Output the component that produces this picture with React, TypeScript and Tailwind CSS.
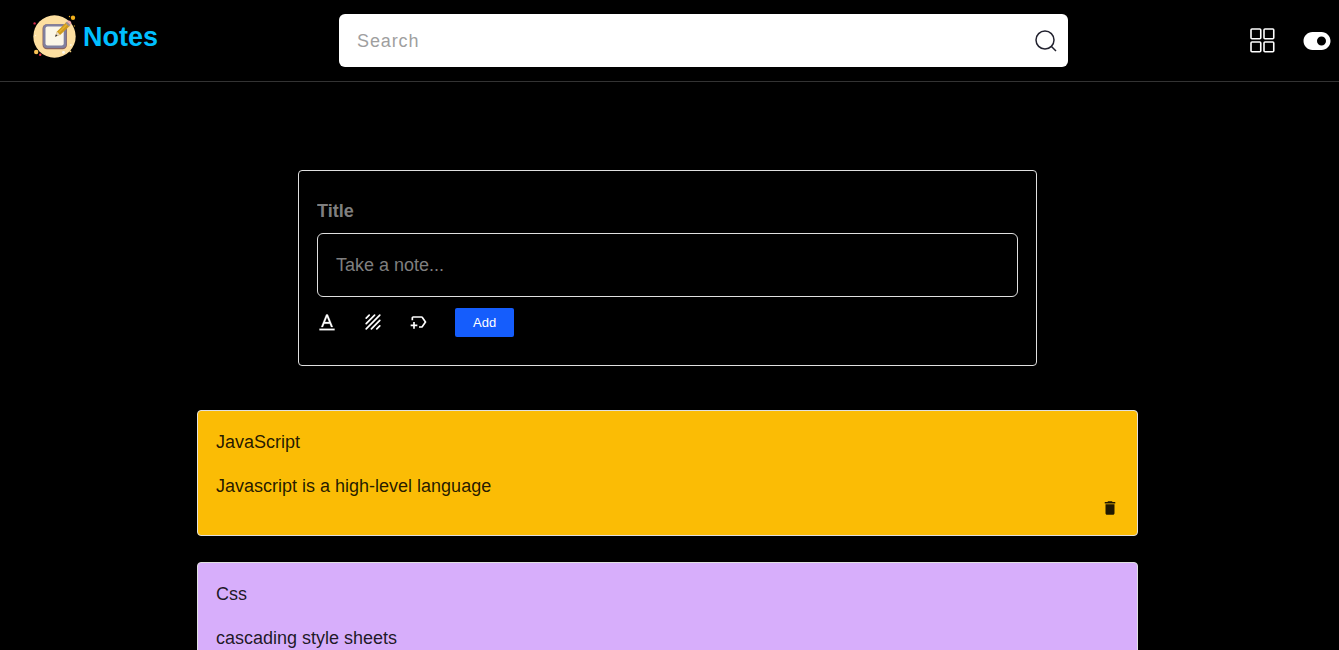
import { FaToggleOn } from "react-icons/fa6";
import { MdDelete, MdOutlineNewLabel } from "react-icons/md";
import { RiFontColor } from "react-icons/ri";

type Note = { title: string; body: string; color: string };

const notes: Note[] = [
  { title: "JavaScript", body: "Javascript is a high-level language", color: "bg-[#fbbc05]" },
  { title: "Css", body: "cascading style sheets", color: "bg-[#d7aefb]" },
];

function Logo() {
  return (
    <svg width="44" height="44" viewBox="0 0 44 44" aria-hidden="true">
      <circle cx="22.5" cy="21.5" r="21.2" fill="#fddfa0" />
      <circle cx="41" cy="2.8" r="2.2" fill="#f2b11c" />
      <circle cx="37.5" cy="1.5" r="0.7" fill="#f2b11c" />
      <circle cx="2.6" cy="8.4" r="1.2" fill="#d8294a" />
      <circle cx="42.4" cy="11" r="0.7" fill="#b98a20" />
      <circle cx="4.2" cy="37" r="2.2" fill="#fbc355" />
      <circle cx="8.2" cy="39.8" r="1.2" fill="#e2334c" />
      <circle cx="38.8" cy="30" r="1.1" fill="#fff6e0" />
      <circle cx="31.5" cy="37.4" r="1.4" fill="#fffdf3" />
      <circle cx="38.4" cy="36.4" r="0.9" fill="#f6cf7c" />
      <circle cx="3.5" cy="20.5" r="0.7" fill="#fff6e0" />
      <rect x="10.5" y="9.2" width="24.5" height="25" rx="4.5" fill="#8a6462" />
      <rect x="11.2" y="9.2" width="23.2" height="23.8" rx="4" fill="#8080a0" />
      <rect x="13.5" y="11.5" width="18.2" height="19" rx="2" fill="#fbf6e7" />
      <path d="M23 21.8 L25 16.4 L34 7.4 L37.6 11 L28.4 19.8 Z" fill="#cf9a1c" />
      <path d="M26.6 17.6 L35.4 9" stroke="#e6b32c" strokeWidth="1.2" />
      <path d="M23 21.8 L25 16.8 L28 19.8 Z" fill="#eadbc5" />
      <path d="M23 21.8 L24 19.2 L25.6 20.8 Z" fill="#30303c" />
      <path d="M33.4 8 L35 6.4 L38.6 10 L37 11.6 Z" fill="#9c8f90" />
      <path d="M35 6.4 Q36.8 4.6 38.7 6.4 Q40.4 8.2 38.6 10 Z" fill="#f3a9a9" />
    </svg>
  );
}

function SearchIcon() {
  return (
    <svg width="22" height="22" viewBox="0 0 22 22" fill="none" stroke="#22222f" strokeWidth="1.5" aria-hidden="true">
      <circle cx="10" cy="10" r="9" />
      <path d="M16 16 L21 21" />
    </svg>
  );
}

function GridIcon() {
  return (
    <svg width="25" height="25" viewBox="0 0 25 25" fill="none" stroke="white" strokeWidth="1.6" aria-hidden="true">
      <rect x="1" y="1" width="9.75" height="9.75" rx="1" />
      <rect x="14" y="1" width="9.75" height="9.75" rx="1" />
      <rect x="1" y="14" width="9.75" height="9.75" rx="1" />
      <rect x="14" y="14" width="9.75" height="9.75" rx="1" />
    </svg>
  );
}

function TextureIcon() {
  return (
    <svg width="20" height="20" viewBox="0 0 20 20" fill="none" stroke="currentColor" strokeWidth="1.7" strokeLinecap="round" aria-hidden="true">
      <path d="M3.2 6.2 L6.2 3.2 M3.2 11.6 L11.6 3.2 M3.2 16.8 L16.8 3.2 M8.4 16.8 L16.8 8.4 M13.8 16.8 L16.8 13.8" />
    </svg>
  );
}

function Header() {
  return (
    <header className="grid grid-cols-[339fr_729fr_271fr] border-b border-[#333333] py-3.5">
      <a href="#" className="flex items-center gap-[7px] self-start pl-8 text-[27px] leading-[46px] font-bold text-[#00bfff]">
        <Logo />
        Notes
      </a>
      <form role="search" className="flex h-[53px] items-center rounded-md bg-white pr-[11px] pl-[18px]">
        <input
          type="text"
          aria-label="Search"
          placeholder="Search"
          className="min-w-0 flex-1 bg-transparent text-[18px] leading-7 tracking-wider text-black outline-none placeholder:text-[#9f9f9f]"
        />
        <button type="button" aria-label="Submit search">
          <SearchIcon />
        </button>
      </form>
      <div className="flex items-center justify-end gap-7 pr-2">
        <button type="button" aria-label="Grid view">
          <GridIcon />
        </button>
        <button type="button" aria-label="Toggle dark mode">
          <FaToggleOn className="h-6 w-7" />
        </button>
      </div>
    </header>
  );
}

function NoteForm() {
  return (
    <form className="w-full max-w-[739px] rounded-[4px] border border-[#e0e0e0] px-[18px] pt-6 pb-7">
      <input
        type="text"
        aria-label="Title"
        placeholder="Title"
        className="block h-8 w-full bg-transparent text-[18px] leading-8 font-bold outline-none placeholder:text-[#7f7f7f]"
      />
      <textarea
        aria-label="Note"
        placeholder="Take a note..."
        rows={1}
        className="mt-1.5 block h-16 w-full resize-none overflow-hidden rounded-md border border-[#e0e0e0] bg-transparent px-[18px] py-4 text-[18px] leading-[30px] outline-none placeholder:text-[#7f7f7f]"
      />
      <div className="mt-[11px] flex items-center">
        <div className="flex items-center gap-[26px] pb-px">
          <button type="button" aria-label="Text color">
            <RiFontColor size={20} stroke="currentColor" strokeWidth={0.3} />
          </button>
          <button type="button" aria-label="Background">
            <TextureIcon />
          </button>
          <button type="button" aria-label="Add label">
            <MdOutlineNewLabel size={20} />
          </button>
        </div>
        <button type="submit" className="ml-[26px] rounded-xs bg-[#155dfc] px-[18px] text-[13px] leading-[29px] text-white">
          Add
        </button>
      </div>
    </form>
  );
}

function NoteCard({ note }: { note: Note }) {
  return (
    <article className={`rounded-[4px] border border-[#e0e0e0] p-[18px] text-[18px] leading-[26px] text-black/87 ${note.color}`}>
      <h2>{note.title}</h2>
      <p className="mt-[18px]">{note.body}</p>
      <div className="flex justify-end">
        <button type="button" aria-label={`Delete ${note.title}`}>
          <MdDelete size={18} />
        </button>
      </div>
    </article>
  );
}

export default function App() {
  return (
    <div className="min-h-screen bg-black font-['Liberation_Sans',Arial,sans-serif] text-white">
      <Header />
      <main className="flex flex-col items-center pt-[88px] pr-1 pb-7">
        <NoteForm />
        <section aria-label="Notes" className="mt-11 flex w-full max-w-[941px] flex-col gap-[26px]">
          {notes.map((note) => (
            <NoteCard key={note.title} note={note} />
          ))}
        </section>
      </main>
    </div>
  );
}
